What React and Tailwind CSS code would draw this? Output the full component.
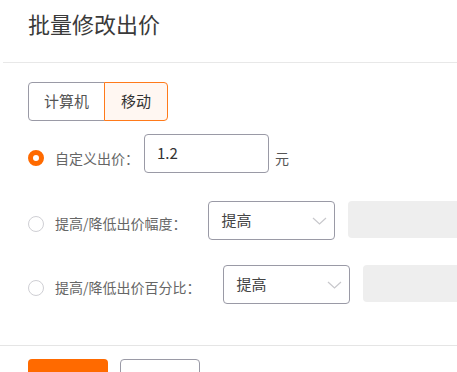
import React from 'react';

const Chevron = () => (
  <svg width="15" height="8" viewBox="0 0 15 8" fill="none">
    <path d="M1 1l6.5 6L14 1" stroke="#c8c8cc" strokeWidth="1.2" />
  </svg>
);

const Select = ({ className = '' }) => (
  <div className={`shrink-0 w-[127px] h-[39px] border border-[#9a9aa6] rounded-[4px] flex items-center justify-between pl-[13px] pr-[7px] text-[15px] text-[#444] ${className}`}>
    <span>提高</span>
    <Chevron />
  </div>
);

const App = () => {
  return (
    <div className="w-[457px] h-[372px] overflow-hidden bg-white font-['Noto_Sans_CJK_SC',sans-serif]">
      {/* 标题 */}
      <div className="ml-[3px] h-[63px] border-b border-[#e8e8e8] pl-[25px] pt-[7px] text-[22px] leading-[32px] text-[#3a3a3a]">
        批量修改出价
      </div>

      <div className="pl-[28px] pt-[19px] h-[282px] whitespace-nowrap">
        <div className="flex h-[39px] text-[15px]">
          <button className="h-full px-[15px] border border-[#9a9aa6] rounded-l-[4px] text-[#555] bg-white">计算机</button>
          <button className="h-full px-[16px] -ml-px border border-[#ff7a1a] rounded-r-[4px] text-[#333] bg-[#fff7f2]">移动</button>
        </div>

        <div className="mt-[13px] flex items-center h-[39px] text-[14px]">
          <div className="shrink-0 flex items-center mt-[9px]">
            <span className="w-4 h-4 rounded-full border-[5px] border-[#ff6a00] bg-white" />
            <span className="ml-[11px] text-[#666]">自定义出价：</span>
          </div>
          <div className="shrink-0 ml-[5px] w-[125px] h-[39px] border border-[#9a9aa6] rounded-[4px] flex items-center pl-[12px] text-[15px] text-[#333]">
            1.2
          </div>
          <span className="shrink-0 ml-[6px] mt-[10px] text-[#555]">元</span>
        </div>

        <div className="mt-[28px] flex items-center h-[39px] text-[14px]">
          <div className="shrink-0 flex items-center mt-[6px]">
            <span className="w-4 h-4 rounded-full border border-[#cfcfd4] bg-white" />
            <span className="ml-[11px] text-[#666]">提高/降低出价幅度：</span>
          </div>
          <Select className="ml-[21px]" />
          <div className="shrink-0 ml-[13px] w-[150px] h-[37px] mb-[3px] bg-[#eeeeee] rounded-[4px]" />
        </div>

        <div className="mt-[25px] flex items-center h-[39px] text-[14px]">
          <div className="shrink-0 flex items-center mt-[6px]">
            <span className="w-4 h-4 rounded-full border border-[#cfcfd4] bg-white" />
            <span className="ml-[11px] text-[#666]">提高/降低出价百分比：</span>
          </div>
          <Select className="ml-[22px]" />
          <div className="shrink-0 ml-[13px] w-[150px] h-[37px] mb-[3px] bg-[#eeeeee] rounded-[4px]" />
        </div>
      </div>

      <div className="border-t border-[#e5e5e5] pt-[13px] pl-[28px] flex gap-[12px] text-[14px]">
        <button className="w-[80px] h-[39px] rounded-[4px] bg-[#ff6a00] text-white">确定</button>
        <button className="w-[80px] h-[39px] rounded-[4px] border border-[#9a9aa6] bg-white text-[#333]">取消</button>
      </div>
    </div>
  );
};

export default App;
